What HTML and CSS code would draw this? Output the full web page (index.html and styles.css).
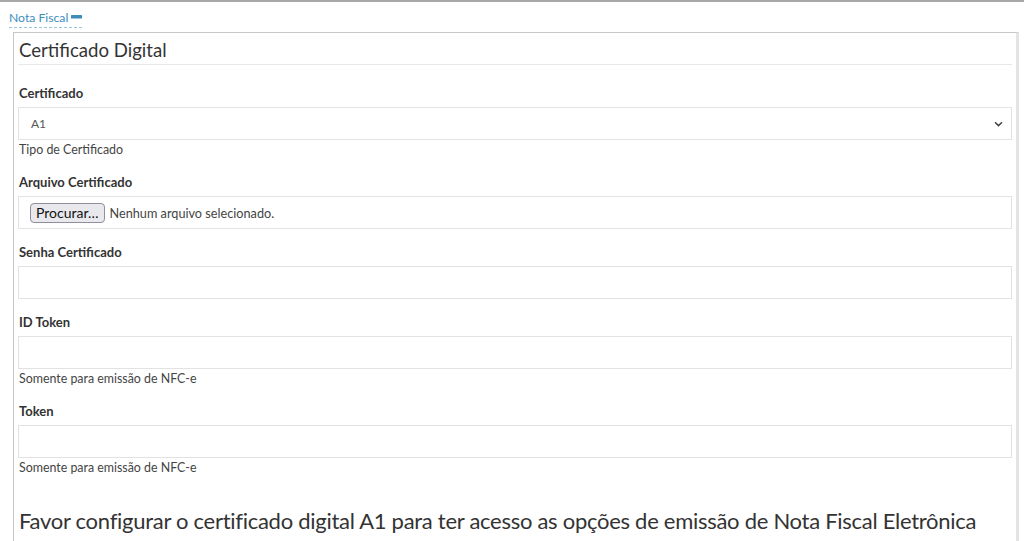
FILE: index.html
```html
<!DOCTYPE html>
<html lang="pt-BR">
<head>
<meta charset="utf-8">
<title>Nota Fiscal</title>
<link rel="stylesheet" href="styles.css">
</head>
<body>
<div class="page">
  <div class="legend-row">
    <span class="legend">Nota Fiscal<svg class="minus" width="11" height="4" viewBox="0 0 11 4"><rect x="0" y="0" width="11" height="3.5" rx="0.6" fill="#3c8dbc"/></svg></span>
  </div>
  <div class="fieldset">
    <h3 class="box-title">Certificado Digital</h3>

    <div class="form-group">
      <label class="lbl">Certificado</label>
      <div class="select">
        <span>A1</span>
        <svg width="9" height="6" viewBox="0 0 9 6"><path d="M1 1.2 L4.5 4.6 L8 1.2" fill="none" stroke="#444" stroke-width="1.5"/></svg>
      </div>
      <p class="help">Tipo de Certificado</p>
    </div>

    <div class="form-group">
      <label class="lbl">Arquivo Certificado</label>
      <div class="file">
        <span class="file-btn">Procurar…</span>
        <span class="file-txt">Nenhum arquivo selecionado.</span>
      </div>
    </div>

    <div class="form-group">
      <label class="lbl">Senha Certificado</label>
      <input class="control" type="password">
    </div>

    <div class="form-group">
      <label class="lbl">ID Token</label>
      <input class="control" type="text">
      <p class="help">Somente para emissão de NFC-e</p>
    </div>

    <div class="form-group">
      <label class="lbl">Token</label>
      <input class="control" type="text">
      <p class="help">Somente para emissão de NFC-e</p>
    </div>

    <h3 class="notice">Favor configurar o certificado digital A1 para ter acesso as opções de emissão de Nota Fiscal Eletrônica</h3>
  </div>
</div>
</body>
</html>
```

FILE: styles.css
```css
* { box-sizing: border-box; }
html, body { margin: 0; padding: 0; background: #fff; }
body {
  font-family: "Lato", "Liberation Sans", sans-serif;
  color: #333;
  overflow: hidden;
  height: 541px;
}
.page {
  border-top: 2px solid #a8a8a8;
  padding: 0 5px 0 13px;
}
.legend-row {
  height: 30px;
  padding-top: 4px;
  margin-left: -4px;
}
.legend {
  display: inline-flex;
  align-items: center;
  font-size: 12.2px;
  line-height: 15px;
  color: #3c8dbc;
  border-bottom: 1px dashed #9cc6df;
  padding-bottom: 2px;
}
.minus { margin-left: 3px; margin-top: -2px; }
.fieldset {
  border: 1px solid #c8c8c8;
  border-right: 3px solid #e4e4e4;
  border-bottom: none;
  padding: 0 4px 0 4px;
  height: 520px;
}
.box-title {
  margin: 0;
  font-weight: 400;
  font-size: 18.6px;
  line-height: 22px;
  padding: 6px 0 3px 1px;
  border-bottom: 1px solid #e8e8e8;
  color: #333;
}
.form-group { margin-top: 18px; }
.form-group + .form-group { margin-top: 13px; }
.lbl {
  display: block;
  font-weight: 700;
  font-size: 13px;
  line-height: 20px;
  margin: 0 0 4px 1px;
}
.select, .file, .control {
  display: flex;
  align-items: center;
  width: 100%;
  height: 33px;
  border: 1px solid #e2e2e2;
  background: #fff;
  margin: 0;
}
.select {
  justify-content: space-between;
  padding: 0 8px 0 12px;
  font-size: 12px;
  color: #555;
}
.control { display: block; outline: none; }
.file { padding: 0 11px; font-size: 12.7px; }
.file-btn {
  display: inline-block;
  font-size: 14px;
  line-height: 16px;
  padding: 1px 5px;
  border: 1px solid #8f8f9d;
  border-radius: 4px;
  background: #e9e9ed;
  color: #111;
}
.file-txt { margin-left: 5px; color: #444; }
.help {
  margin: 0 0 0 1px;
  font-size: 12.4px;
  line-height: 19px;
  color: #444;
}
.notice {
  margin: 29px 0 0 1px;
  font-weight: 400;
  font-size: 22px;
  letter-spacing: -0.28px;
  line-height: 30px;
  color: #333;
}
```
